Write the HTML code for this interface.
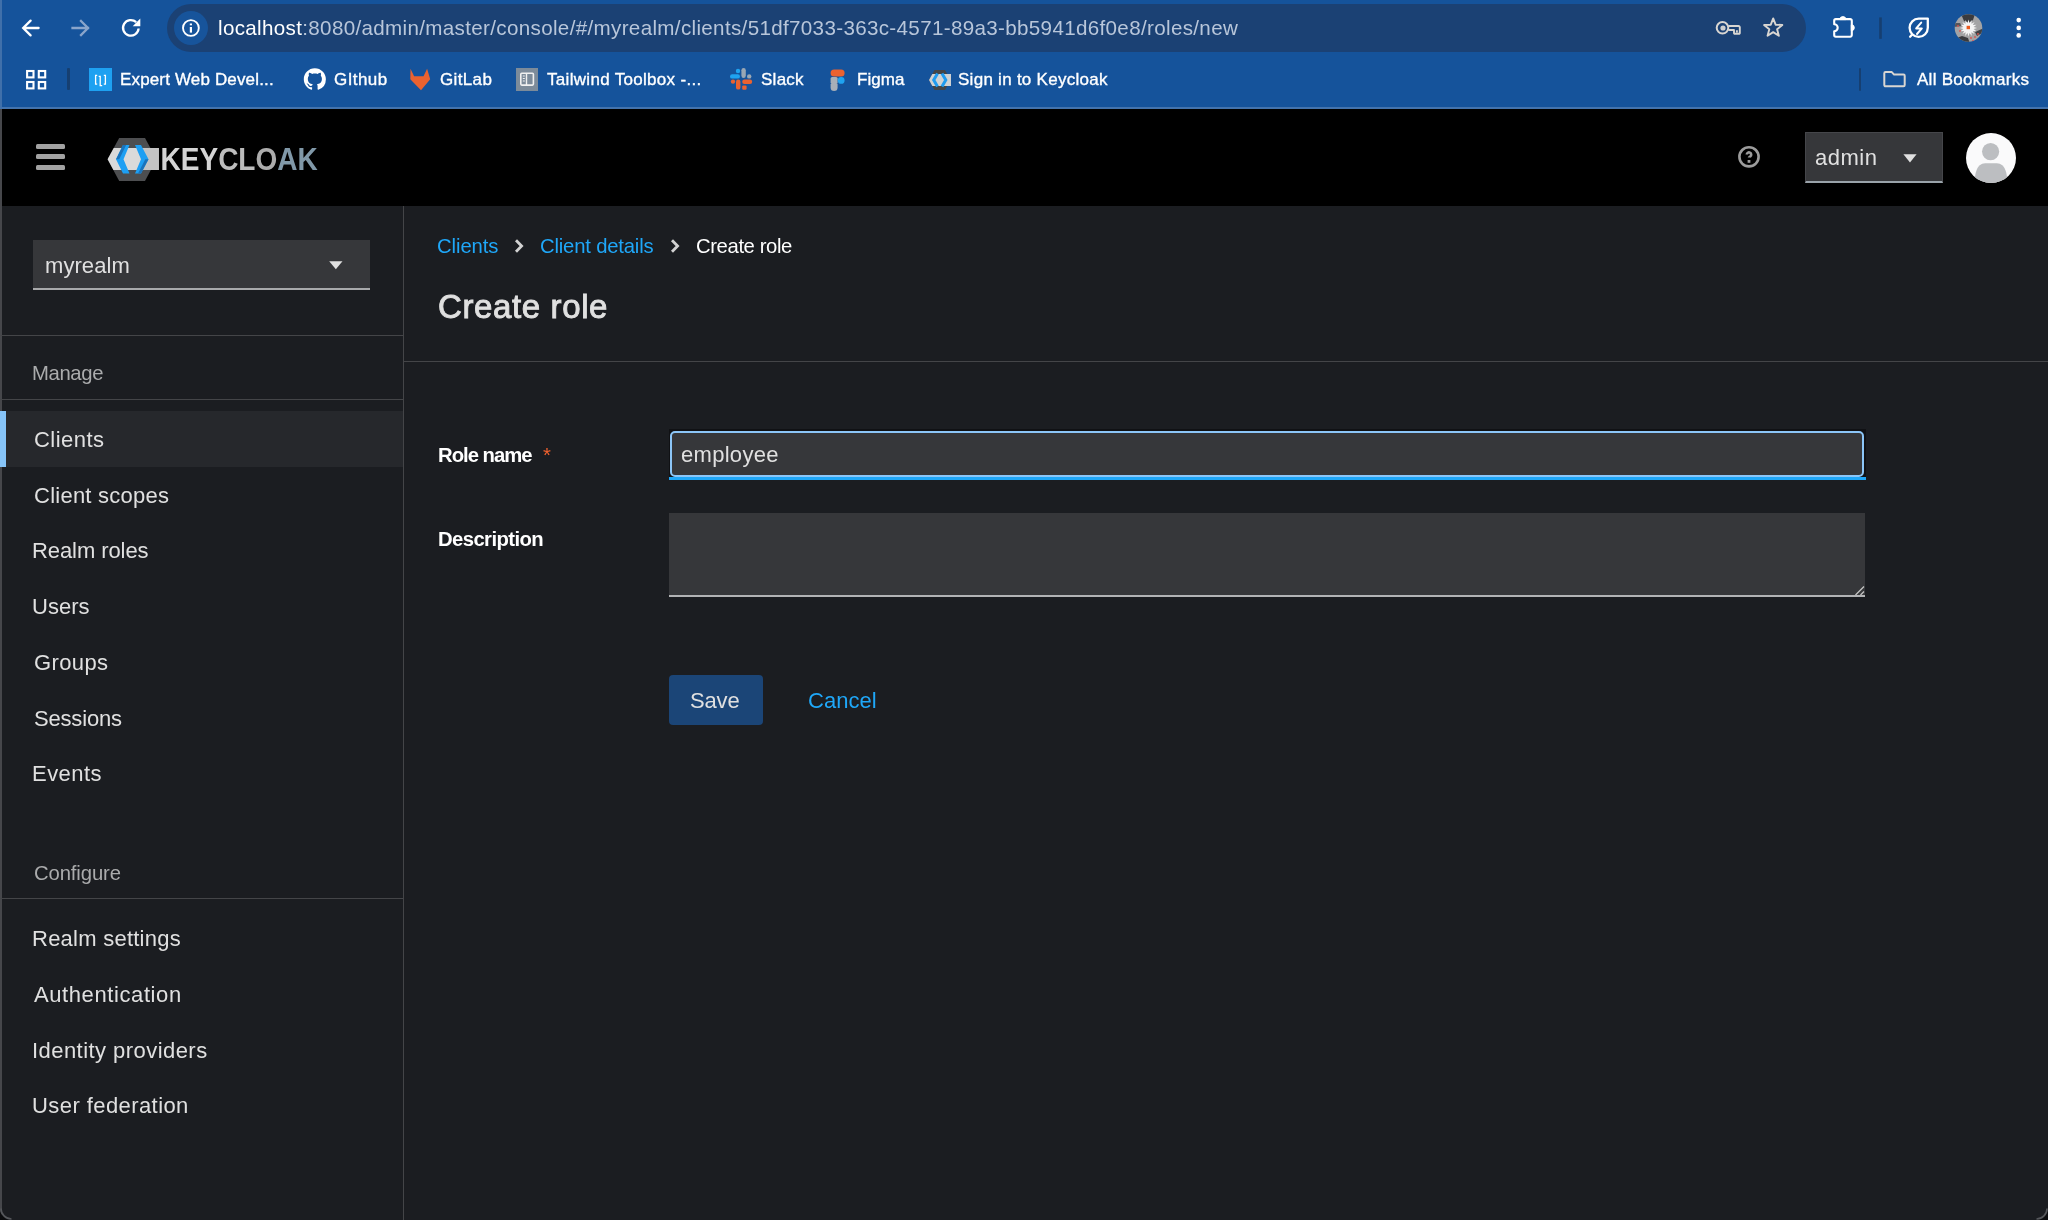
<!DOCTYPE html>
<html><head><meta charset="utf-8"><title>Keycloak - Create role</title>
<style>
html,body{margin:0;padding:0;}
body{width:2048px;height:1220px;overflow:hidden;position:relative;background:#1b1d21;font-family:"Liberation Sans",sans-serif;}
.t{position:absolute;white-space:nowrap;line-height:1;will-change:transform;}
.r{position:absolute;display:block;}
</style></head><body>
<div class="r" style="left:0px;top:0px;width:2048px;height:107px;background:#15539b"></div>
<div class="r" style="left:0px;top:107px;width:2048px;height:2px;background:#4373ad"></div>
<div class="r" style="left:167px;top:4px;width:1639px;height:47.6px;background:#1b4174;border-radius:24px"></div>
<div class="r" style="left:174px;top:10.8px;width:34px;height:34px;background:#17549b;border-radius:50%"></div>
<svg class="r" style="left:0px;top:0px;" width="160" height="54" viewBox="0 0 160 54"><path d="M38.6 28H23.4 M30.6 20.6L23.2 28l7.4 7.4" fill="none" stroke="#ffffff" stroke-width="2.3" stroke-linecap="round"/>
<path d="M72.5 28H88 M81 21l7 7-7 7" fill="none" stroke="#8aa5cb" stroke-width="2.3" stroke-linecap="square"/>
<path d="M138.6 28.5a7.8 7.8 0 1 1-2.4-6.3" fill="none" stroke="#ffffff" stroke-width="2.3"/><path d="M140.3 18.6v7.6h-7.6z" fill="#ffffff"/></svg>
<svg class="r" style="left:179px;top:16px;" width="24" height="24" viewBox="0 0 24 24"><circle cx="11.9" cy="12" r="7.9" fill="none" stroke="#ffffff" stroke-width="1.9"/><rect x="10.8" y="11" width="2.2" height="5.6" fill="#fff"/><rect x="10.8" y="7.5" width="2.2" height="1.8" fill="#fff"/></svg>
<div class="t" style="left:218.26px;top:18.06px;font-size:20.6px;color:#b8c6da;font-weight:400;letter-spacing:0.333px;"><span style="color:#ffffff">localhost</span>:8080/admin/master/console/#/myrealm/clients/51df7033-363c-4571-89a3-bb5941d6f0e8/roles/new</div>
<svg class="r" style="left:1710px;top:14px;" width="80" height="28" viewBox="0 0 80 28"><circle cx="12.5" cy="13.8" r="5.8" fill="none" stroke="#d9d6d2" stroke-width="2"/><circle cx="13" cy="14" r="2.6" fill="#cfcfcf"/>
<path d="M18.3 12H28.5a1.3 1.3 0 0 1 1.3 1.3V19a.8.8 0 0 1-.8.8h-4.2a.8.8 0 0 1-.8-.8V16H18.3 M26.9 16.2v2.4" fill="none" stroke="#d9d6d2" stroke-width="1.9" stroke-linejoin="round"/>
<path d="M63.20 4.40 L65.61 10.68 L72.33 11.03 L67.10 15.27 L68.84 21.77 L63.20 18.10 L57.56 21.77 L59.30 15.27 L54.07 11.03 L60.79 10.68Z" fill="none" stroke="#d9d6d2" stroke-width="1.9" stroke-linejoin="round"/></svg>
<svg class="r" style="left:1826px;top:10px;" width="110" height="34" viewBox="0 0 110 34"><path d="M9.8 9.1H24.2A1.6 1.6 0 0 1 25.8 10.7V25.1A1.6 1.6 0 0 1 24.2 26.7H9.8A1.6 1.6 0 0 1 8.2 25.1V21.2A3.5 3.5 0 0 0 8.2 14.2V10.7A1.6 1.6 0 0 1 9.8 9.1Z" fill="none" stroke="#ffffff" stroke-width="2.1" stroke-linejoin="round"/><path d="M13.9 9.6A3 3 0 0 1 19.9 9.6Z M25.3 14.7A3 3 0 0 1 25.3 20.7Z" fill="#ffffff" stroke="#ffffff" stroke-width="1"/>
<rect x="53.2" y="7.4" width="2.6" height="21.4" fill="#163f71"/>
<path d="M101.8 8.6V17.8A9.1 9.1 0 1 1 92.7 8.7Z M86.4 24.3l-2.3 2.4" fill="none" stroke="#ffffff" stroke-width="2.3" stroke-linejoin="round" stroke-linecap="round"/>
<path d="M95.2 12.6l-5 5.8h5.6l-4.8 5.6" fill="none" stroke="#ffffff" stroke-width="2" stroke-linejoin="round" stroke-linecap="round"/></svg>
<svg class="r" style="left:1954px;top:14px;" width="30" height="30" viewBox="0 0 30 30"><defs><clipPath id="av"><circle cx="14.5" cy="14" r="13.8"/></clipPath></defs><circle cx="14.5" cy="14" r="13.8" fill="#a3a3a4"/>
<g clip-path="url(#av)"><path d="M7 0h14l-2 6-4 3-5-2z" fill="#3a3b3e"/><path d="M0 25l8-3 6 2 2 6H0z" fill="#3a3b3e"/><path d="M21 18l9-4v4l-7 4z" fill="#3f4043"/><path d="M0 9h6l2 3-8 1z" fill="#55565a"/>
<g fill="#d9534f"><circle cx="6" cy="17" r=".9"/><circle cx="4" cy="12" r=".9"/><circle cx="17" cy="24" r=".9"/><circle cx="21" cy="23" r=".9"/><circle cx="24" cy="20" r=".9"/><circle cx="19" cy="27" r=".9"/></g></g>
<path d="M23.10 14.00 L19.60 15.01 L22.45 17.29 L18.82 16.89 L20.58 20.08 L17.39 18.32 L17.79 21.95 L15.51 19.10 L14.50 22.60 L13.49 19.10 L11.21 21.95 L11.61 18.32 L8.42 20.08 L10.18 16.89 L6.55 17.29 L9.40 15.01 L5.90 14.00 L9.40 12.99 L6.55 10.71 L10.18 11.11 L8.42 7.92 L11.61 9.68 L11.21 6.05 L13.49 8.90 L14.50 5.40 L15.51 8.90 L17.79 6.05 L17.39 9.68 L20.58 7.92 L18.82 11.11 L22.45 10.71 L19.60 12.99Z" fill="#f4f4f4"/><rect x="12.6" y="11.8" width="3.4" height="3.4" fill="#ea5a1e"/></svg>
<svg class="r" style="left:2012px;top:16px;" width="14" height="24" viewBox="0 0 14 24"><circle cx="6.7" cy="4.1" r="2.3" fill="#fff"/><circle cx="6.7" cy="11.9" r="2.3" fill="#fff"/><circle cx="6.7" cy="19.4" r="2.3" fill="#fff"/></svg>
<svg class="r" style="left:24px;top:68px;" width="26" height="24" viewBox="0 0 26 24"><rect x="3.1" y="3" width="6.4" height="6.4" fill="none" stroke="#fff" stroke-width="2.1"/><rect x="14.8" y="3" width="6.4" height="6.4" fill="none" stroke="#fff" stroke-width="2.1"/><rect x="3.1" y="14" width="6.4" height="6.4" fill="none" stroke="#fff" stroke-width="2.1"/><rect x="14.8" y="14" width="6.4" height="6.4" fill="none" stroke="#fff" stroke-width="2.1"/></svg>
<div class="r" style="left:67.2px;top:68.2px;width:2.6px;height:22.3px;background:#163f71;border-radius:1px"></div>
<div class="r" style="left:89px;top:68px;width:22.7px;height:22.8px;background:#1ea1f1"></div>
<svg class="r" style="left:89px;top:68px;" width="23" height="23" viewBox="0 0 23 23"><path d="M8.2 7.3H6.6v8.8h1.6 M14.8 7.3h1.6v8.8h-1.6" fill="none" stroke="#fff" stroke-width="1.3"/><path d="M9.7 8.4h1.5v9.3h2" fill="none" stroke="#fff" stroke-width="1.3"/></svg>
<div class="t" style="left:119.84px;top:70.51px;font-size:17px;color:#ffffff;font-weight:400;letter-spacing:0.154px;-webkit-text-stroke:0.35px #ffffff;">Expert Web Devel...</div>
<svg class="r" style="left:302px;top:67px;" width="26" height="25" viewBox="0 0 26 25"><path fill="#ffffff" transform="translate(1.8,1.2) scale(1.38)" d="M8 0C3.58 0 0 3.58 0 8c0 3.54 2.29 6.53 5.47 7.59.4.07.55-.17.55-.38 0-.19-.01-.82-.01-1.49-2.01.37-2.53-.49-2.69-.94-.09-.23-.48-.94-.82-1.13-.28-.15-.68-.52-.01-.53.63-.01 1.08.58 1.23.82.72 1.21 1.87.87 2.33.66.07-.52.28-.87.51-1.07-1.78-.2-3.64-.89-3.64-3.95 0-.87.31-1.59.82-2.15-.08-.2-.36-1.02.08-2.12 0 0 .67-.21 2.2.82.64-.18 1.32-.27 2-.27.68 0 1.36.09 2 .27 1.53-1.04 2.2-.82 2.2-.82.44 1.1.16 1.92.08 2.12.51.56.82 1.27.82 2.15 0 3.07-1.87 3.75-3.65 3.95.29.25.54.73.54 1.48 0 1.07-.01 1.93-.01 2.2 0 .21.15.46.55.38A8.013 8.013 0 0016 8c0-4.42-3.58-8-8-8z"/></svg>
<div class="t" style="left:334.2px;top:70.51px;font-size:17px;color:#ffffff;font-weight:400;letter-spacing:0.432px;-webkit-text-stroke:0.35px #ffffff;">GIthub</div>
<svg class="r" style="left:408px;top:67px;" width="26" height="25" viewBox="0 0 26 25"><path d="M2.5 1.8l3.6 7.4h9.4l3.6-7.4 3.1 10.4L13 23.2 2.3 12.2z" fill="#ea6230"/></svg>
<div class="t" style="left:439.62px;top:70.51px;font-size:17px;color:#ffffff;font-weight:400;letter-spacing:0.356px;-webkit-text-stroke:0.35px #ffffff;">GitLab</div>
<div class="r" style="left:516px;top:68px;width:22px;height:22.8px;background:#7c8b9a"></div>
<svg class="r" style="left:516px;top:68px;" width="22" height="23" viewBox="0 0 22 23"><rect x="4.8" y="5.3" width="12.6" height="11.8" rx="1" fill="none" stroke="#f0f0f0" stroke-width="1.6"/><path d="M10.5 5.5v11.5" stroke="#f0f0f0" stroke-width="1.4"/><path d="M6.8 8h2 M6.8 10.5h2 M6.8 13h2" stroke="#f0f0f0" stroke-width="1"/></svg>
<div class="t" style="left:546.64px;top:70.51px;font-size:17px;color:#ffffff;font-weight:400;letter-spacing:0.308px;-webkit-text-stroke:0.35px #ffffff;">Tailwind Toolbox -...</div>
<svg class="r" style="left:729px;top:67px;" width="25" height="25" viewBox="0 0 25 25"><circle cx="9" cy="4" r="2.2" fill="#1fa3f0"/><rect x="1" y="7.2" width="10" height="4.4" rx="2.2" fill="#1fa3f0"/>
<rect x="12.4" y="1" width="4.4" height="10" rx="2.2" fill="#9aa7b4"/><circle cx="20.2" cy="9.4" r="2.2" fill="#9aa7b4"/>
<circle cx="4" cy="14.6" r="2.2" fill="#ea6230"/><rect x="7" y="12.6" width="4.4" height="10" rx="2.2" fill="#ea6230"/>
<rect x="13.2" y="12.6" width="10" height="4.4" rx="2.2" fill="#ea6230"/><rect x="13.2" y="18.4" width="4.4" height="4.4" rx="1.2" fill="#ea6230"/></svg>
<div class="t" style="left:760.84px;top:70.51px;font-size:17px;color:#ffffff;font-weight:400;letter-spacing:0.26px;-webkit-text-stroke:0.35px #ffffff;">Slack</div>
<svg class="r" style="left:829px;top:68px;" width="18" height="24" viewBox="0 0 18 24"><rect x="1.6" y="1.6" width="14" height="7" rx="3.5" fill="#ea6230"/><rect x="1.6" y="9" width="7" height="7" rx="1.5" fill="#a7afb8"/><circle cx="12.2" cy="12.4" r="3.4" fill="#1fa3f0"/><path d="M1.6 16h7v3.6a3.5 3.5 0 0 1-7 0z" fill="#a7afb8"/></svg>
<div class="t" style="left:856.84px;top:70.51px;font-size:17px;color:#ffffff;font-weight:400;letter-spacing:0.035px;-webkit-text-stroke:0.35px #ffffff;">Figma</div>
<svg class="r" style="left:927px;top:68px;" width="26" height="24" viewBox="0 0 26 24"><path d="M7.5 2h10.5l5.5 10-5.5 10H7.5L2 12z" fill="#434447"/><path d="M2 12l3.3-6H24v12H5.3z" fill="#cfd1d3"/><path d="M10.5 5.5l-3.8 6.5 3.8 6.5 M15 5.5l3.8 6.5-3.8 6.5" fill="none" stroke="#1f9bf0" stroke-width="3"/></svg>
<div class="t" style="left:958.34px;top:70.51px;font-size:17px;color:#ffffff;font-weight:400;letter-spacing:0.272px;-webkit-text-stroke:0.35px #ffffff;">Sign in to Keycloak</div>
<div class="r" style="left:1858.5px;top:68px;width:2.6px;height:22.5px;background:#163f71;border-radius:1px"></div>
<svg class="r" style="left:1880px;top:68px;" width="30" height="24" viewBox="0 0 30 24"><path d="M4.3 5.3a1.2 1.2 0 0 1 1.2-1.2h6.3l2.3 2.5h9.4a1.2 1.2 0 0 1 1.2 1.2v9.3a1.2 1.2 0 0 1-1.2 1.2H5.5a1.2 1.2 0 0 1-1.2-1.2z" fill="none" stroke="#d9d6d2" stroke-width="2" stroke-linejoin="round"/></svg>
<div class="t" style="left:1917.36px;top:70.51px;font-size:17px;color:#ffffff;font-weight:400;letter-spacing:0.278px;-webkit-text-stroke:0.35px #ffffff;">All Bookmarks</div>
<div class="r" style="left:0px;top:109px;width:2048px;height:97px;background:#000"></div>
<div class="r" style="left:36px;top:144px;width:29px;height:5px;background:#a2a2a2;border-radius:1.5px"></div>
<div class="r" style="left:36px;top:154px;width:29px;height:5px;background:#a2a2a2;border-radius:1.5px"></div>
<div class="r" style="left:36px;top:165px;width:29px;height:5px;background:#a2a2a2;border-radius:1.5px"></div>
<svg class="r" style="left:106px;top:136px;will-change:transform" width="214" height="46" viewBox="0 0 214 46"><path d="M13.2 2H39l11.5 21.3L39 45H13.2L1.6 23.3z" fill="#4d4e50"/>
<path d="M1.6 23.3L7.75 12H52.8V34H7.4z" fill="#dadada"/><path d="M37 12H52.8V34H37z" fill="#c4c4c4"/>
<path d="M17 9h6.5l-6 14.3 6 14.2H17l-7-14.2z" fill="#1d9ff3"/><path d="M17 9h3.2l-7 14.3H10z" fill="#1a73bb"/>
<path d="M29 9h6l7.5 14.3L35 37.5h-6l6-14.2z" fill="#1d9ff3"/><path d="M42.5 23.3h-3.2L32 37.5h3z" fill="#1a73bb"/>
<text x="54.5" y="34" font-family="Liberation Sans" font-weight="700" font-size="31.6" textLength="157.3" lengthAdjust="spacingAndGlyphs"><tspan fill="#d4d4d4">KEY</tspan><tspan fill="#bcbcbc">CL</tspan><tspan fill="#acacac">O</tspan><tspan fill="#8098a8">AK</tspan></text></svg>
<svg class="r" style="left:1736px;top:144px;" width="26" height="26" viewBox="0 0 26 26"><circle cx="13" cy="12.8" r="9.6" fill="none" stroke="#9c9c9c" stroke-width="2.6"/><path d="M10.8 10.6A2.2 2.2 0 1 1 14.4 12.3C13.4 12.8 13 13.1 13 13.6" fill="none" stroke="#9c9c9c" stroke-width="2.6"/><rect x="11.6" y="16" width="2.8" height="2.8" fill="#9c9c9c"/></svg>
<div class="r" style="left:1805px;top:132.3px;width:138.2px;height:50.4px;background:#36373a;border:1px solid #45464a;border-bottom:2px solid #9aa3aa;box-sizing:border-box"></div>
<div class="t" style="left:1814.98px;top:147.38px;font-size:22px;color:#e0e0e0;font-weight:400;letter-spacing:0.5px;">admin</div>
<svg class="r" style="left:1903px;top:153.5px;" width="14" height="9" viewBox="0 0 14 9"><path d="M0.4 0.2h13.2L7 8.4z" fill="#e0e0e0"/></svg>
<svg class="r" style="left:1966px;top:132.6px;" width="50" height="50" viewBox="0 0 50 50"><defs><clipPath id="ac"><circle cx="25" cy="25" r="25"/></clipPath></defs><circle cx="25" cy="25" r="25" fill="#fafafb"/><g clip-path="url(#ac)"><circle cx="24.6" cy="18.6" r="8.6" fill="#bcbec1"/><path d="M8.6 52C8.6 42 10 35.5 13.8 32.2C15.3 30.9 17 30.2 19.2 30.2H30.8C33 30.2 34.7 30.9 36.2 32.2C40 35.5 41.4 42 41.4 52Z" fill="#bcbec1"/></g></svg>
<div class="r" style="left:0px;top:206px;width:403px;height:1014px;background:#1b1d21"></div>
<div class="r" style="left:403px;top:206px;width:1px;height:1014px;background:#444548"></div>
<div class="r" style="left:0px;top:109px;width:2px;height:1111px;background:#46474b"></div>
<div class="r" style="left:33.2px;top:240px;width:336.6px;height:50px;background:#36373a;border-bottom:2px solid #a8a9ab;box-sizing:border-box"></div>
<div class="t" style="left:44.7px;top:255.38px;font-size:22px;color:#e0e0e0;font-weight:400;letter-spacing:0.063px;">myrealm</div>
<svg class="r" style="left:329px;top:261px;" width="14" height="9" viewBox="0 0 14 9"><path d="M0.2 0.2h13.3L6.85 8.2z" fill="#e0e0e0"/></svg>
<div class="r" style="left:0px;top:335px;width:403px;height:1px;background:#444548"></div>
<div class="t" style="left:32.46px;top:362.82px;font-size:20.3px;color:#aaabac;font-weight:400;letter-spacing:-0.368px;">Manage</div>
<div class="r" style="left:0px;top:399px;width:403px;height:1px;background:#444548"></div>
<div class="r" style="left:0px;top:411px;width:403px;height:56px;background:#26282c"></div>
<div class="r" style="left:0px;top:411px;width:6px;height:56px;background:#86c4f8"></div>
<div class="t" style="left:33.56px;top:429.38px;font-size:22px;color:#e0e0e0;font-weight:400;letter-spacing:0.46px;">Clients</div>
<div class="t" style="left:33.56px;top:485.38px;font-size:22px;color:#e0e0e0;font-weight:400;letter-spacing:0.245px;">Client scopes</div>
<div class="t" style="left:31.96px;top:540.38px;font-size:22px;color:#e0e0e0;font-weight:400;letter-spacing:-0.084px;">Realm roles</div>
<div class="t" style="left:31.96px;top:596.38px;font-size:22px;color:#e0e0e0;font-weight:400;letter-spacing:0.03px;">Users</div>
<div class="t" style="left:33.56px;top:652.38px;font-size:22px;color:#e0e0e0;font-weight:400;letter-spacing:0.372px;">Groups</div>
<div class="t" style="left:33.56px;top:708.38px;font-size:22px;color:#e0e0e0;font-weight:400;letter-spacing:-0.18px;">Sessions</div>
<div class="t" style="left:31.96px;top:763.38px;font-size:22px;color:#e0e0e0;font-weight:400;letter-spacing:0.452px;">Events</div>
<div class="t" style="left:33.56px;top:862.82px;font-size:20.3px;color:#aaabac;font-weight:400;letter-spacing:-0.12px;">Configure</div>
<div class="r" style="left:0px;top:898px;width:403px;height:1px;background:#444548"></div>
<div class="t" style="left:31.96px;top:928.38px;font-size:22px;color:#e0e0e0;font-weight:400;letter-spacing:0.246px;">Realm settings</div>
<div class="t" style="left:34.36px;top:984.38px;font-size:22px;color:#e0e0e0;font-weight:400;letter-spacing:0.592px;">Authentication</div>
<div class="t" style="left:31.96px;top:1040.38px;font-size:22px;color:#e0e0e0;font-weight:400;letter-spacing:0.448px;">Identity providers</div>
<div class="t" style="left:31.96px;top:1095.38px;font-size:22px;color:#e0e0e0;font-weight:400;letter-spacing:0.424px;">User federation</div>
<div class="r" style="left:404px;top:206px;width:1644px;height:1014px;background:#1b1d21"></div>
<div class="t" style="left:437.48px;top:235.92px;font-size:20.3px;color:#1fa7f8;font-weight:400;letter-spacing:-0.093px;">Clients</div>
<svg class="r" style="left:511.3px;top:235px;" width="16" height="20" viewBox="0 0 16 20"><path d="M5 5.2l5.6 5.8L5 16.8" fill="none" stroke="#d2d2d2" stroke-width="2.8"/></svg>
<div class="t" style="left:539.98px;top:235.92px;font-size:20.3px;color:#1fa7f8;font-weight:400;letter-spacing:-0.194px;">Client details</div>
<svg class="r" style="left:666.6px;top:235px;" width="16" height="20" viewBox="0 0 16 20"><path d="M5 5.2l5.6 5.8L5 16.8" fill="none" stroke="#d2d2d2" stroke-width="2.8"/></svg>
<div class="t" style="left:695.56px;top:235.92px;font-size:20.3px;color:#ffffff;font-weight:400;letter-spacing:-0.394px;">Create role</div>
<div class="t" style="left:437.84px;top:290.17px;font-size:33px;color:#e0e0e0;font-weight:400;letter-spacing:0.62px;-webkit-text-stroke:0.9px #e0e0e0;">Create role</div>
<div class="r" style="left:404px;top:361px;width:1644px;height:1px;background:#444548"></div>
<div class="t" style="left:437.62px;top:444.82px;font-size:20.3px;color:#ffffff;font-weight:700;letter-spacing:-0.995px;">Role name</div>
<div class="t" style="left:543.2px;top:444.82px;font-size:20.3px;color:#f0612e;font-weight:400;letter-spacing:0px;">*</div>
<div class="r" style="left:669px;top:429.4px;width:1197px;height:50.6px;background:#101114"></div>
<div class="r" style="left:670.3px;top:430.8px;width:1194px;height:46.2px;background:#36373a;border:2.6px solid #8cc6f8;border-radius:5px;box-sizing:border-box"></div>
<div class="r" style="left:669px;top:477px;width:1197px;height:3px;background:#1fa7f8"></div>
<div class="t" style="left:680.56px;top:443.88px;font-size:22px;color:#e0e0e0;font-weight:400;letter-spacing:0.294px;">employee</div>
<div class="t" style="left:437.62px;top:528.82px;font-size:20.3px;color:#ffffff;font-weight:700;letter-spacing:-0.594px;">Description</div>
<div class="r" style="left:669px;top:513px;width:1196px;height:84px;background:#36373a;border-bottom:2px solid #b2b3b5;box-sizing:border-box"></div>
<svg class="r" style="left:1852px;top:583px;" width="13" height="13" viewBox="0 0 13 13"><path d="M12 3.5L3.5 12 M12 8.5L8.5 12" stroke="#c4c4c4" stroke-width="1.3"/></svg>
<div class="r" style="left:669.3px;top:674.9px;width:93.4px;height:50.1px;background:#1b4577;border-radius:4px"></div>
<div class="t" style="left:690.48px;top:689.88px;font-size:22px;color:#e0e0e0;font-weight:400;letter-spacing:-0.167px;">Save</div>
<div class="t" style="left:807.56px;top:689.88px;font-size:22px;color:#1fa7f8;font-weight:400;letter-spacing:0.052px;">Cancel</div>
<div class="r" style="left:0px;top:0px;width:2px;height:107px;background:#4070aa"></div>
<svg class="r" style="left:0px;top:1200px;" width="20" height="20" viewBox="0 0 20 20"><path d="M0 8.5A11.5 11.5 0 0 0 11.5 20H0z" fill="#0c0d0f"/><path d="M1 8.5A10.5 10.5 0 0 0 11.5 19" fill="none" stroke="#55575b" stroke-width="1.6"/></svg>
<svg class="r" style="left:2028px;top:1200px;" width="20" height="20" viewBox="0 0 20 20"><path d="M20 8.5A11.5 11.5 0 0 1 8.5 20H20z" fill="#0c0d0f"/><path d="M19 8.5A10.5 10.5 0 0 1 8.5 19" fill="none" stroke="#55575b" stroke-width="1.6"/></svg>
</body></html>
